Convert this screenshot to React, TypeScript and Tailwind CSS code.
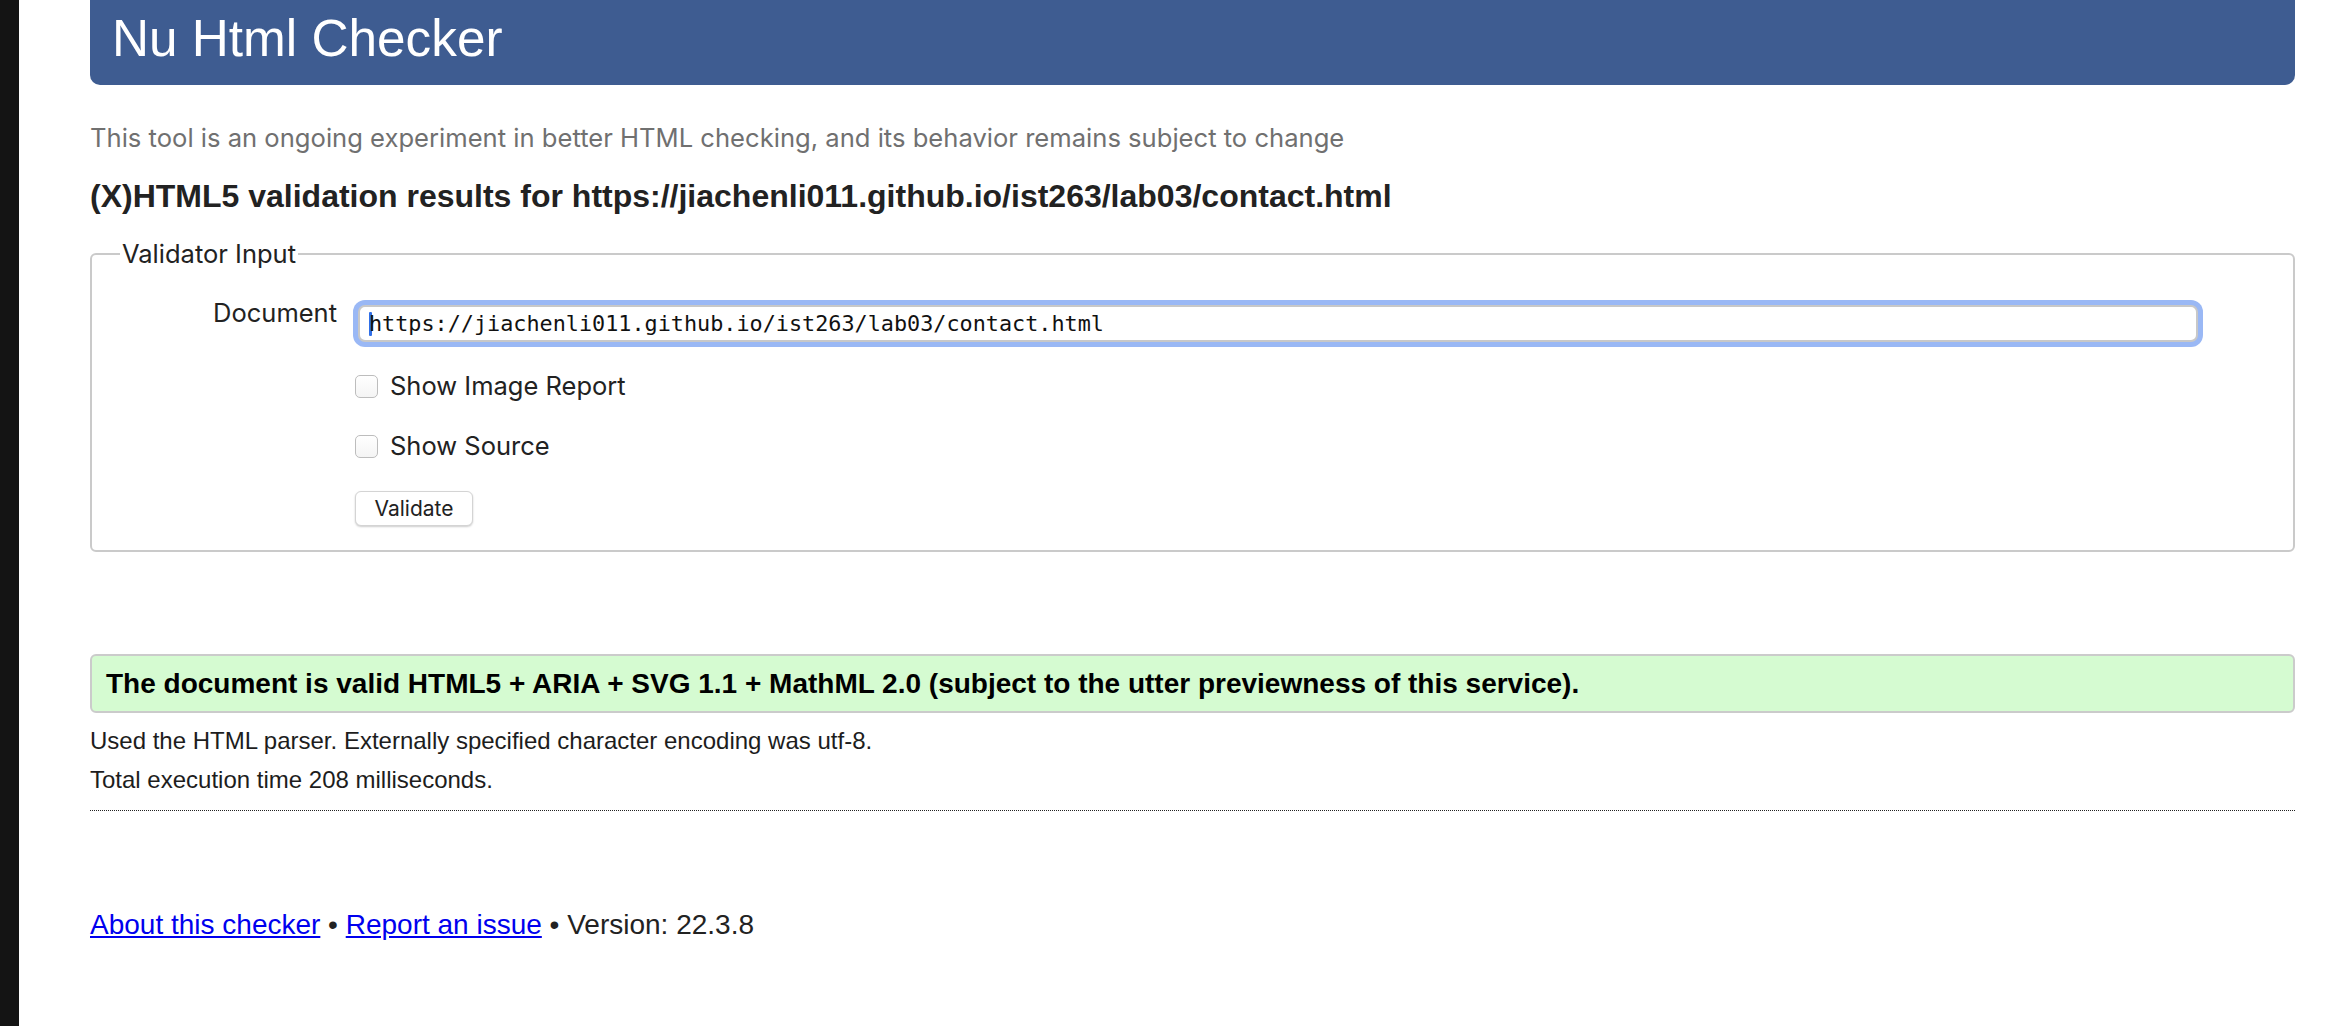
export default function App() {
  return (
    <div className="flex min-h-screen bg-white font-['Liberation_Sans',Arial,sans-serif] text-[#222]">
      <div className="w-[19px] shrink-0 bg-[#141414]" />
      <div className="flex-1 pl-[71px] pr-[53px]">
        <div className="flex h-[85px] items-center rounded-b-[10px] bg-[#3e5c91] px-[22px] pb-[8px]">
          <h1 className="text-[51.3px] leading-none text-white">Nu Html Checker</h1>
        </div>

        <p className="mt-[38px] font-['Inter',sans-serif] text-[25.6px] leading-[30px] text-[#707070]">
          This tool is an ongoing experiment in better HTML checking, and its behavior remains subject to change
        </p>
        <h2 className="mt-[24px] text-[32px] font-bold leading-[38px] text-[#222]">
          (X)HTML5 validation results for https://jiachenli011.github.io/ist263/lab03/contact.html
        </h2>

        <fieldset className="mt-[25px] h-[312px] rounded-[6px] border-2 border-[#cacaca] pl-[28px] pr-[90px] font-['Inter',sans-serif]">
          <legend className="px-[2px] text-[25.5px] leading-[28px] text-[#222]">Validator Input</legend>
          <div className="mt-[28px] flex items-start">
            <label className="w-[233px] pr-[16px] text-right text-[25.5px] leading-[34px] text-[#222]">Document</label>
            <div className="mt-[4px] flex-1 rounded-[12px] bg-[#9ab8f5] p-[5px]">
              <div className="flex h-[37px] items-center rounded-[7px] border-2 border-[#c8c8c8] bg-white pl-[9px]">
                <span className="h-[24px] w-[3px] rounded-[1px] bg-[#2f6fe8]" />
                <span className="-ml-[3px] font-['DejaVu_Sans_Mono',monospace] text-[21.8px] leading-none text-[#111]">
                  https://jiachenli011.github.io/ist263/lab03/contact.html
                </span>
              </div>
            </div>
          </div>
          <div className="ml-[235px] mt-[24px] flex items-center gap-[12px]">
            <span className="h-[23px] w-[23px] rounded-[5px] border border-[#bdbdbd] bg-gradient-to-b from-white to-[#f4f4f4]" />
            <span className="text-[25.5px] leading-[30px] text-[#222]">Show Image Report</span>
          </div>
          <div className="ml-[235px] mt-[30px] flex items-center gap-[12px]">
            <span className="h-[23px] w-[23px] rounded-[5px] border border-[#bdbdbd] bg-gradient-to-b from-white to-[#f4f4f4]" />
            <span className="text-[25.5px] leading-[30px] text-[#222]">Show Source</span>
          </div>
          <div className="ml-[235px] mt-[30px]">
            <button className="h-[35px] w-[118px] rounded-[6px] border border-[#d4d4d4] bg-white text-[21px] leading-none text-[#222] shadow-[0_1px_2px_rgba(0,0,0,0.2)]">
              Validate
            </button>
          </div>
        </fieldset>

        <div className="mt-[102px] flex h-[59px] items-center rounded-[6px] border-2 border-[#cbcbcb] bg-[#d5fbd1] px-[14px]">
          <p className="text-[28px] font-bold text-black">
            The document is valid HTML5 + ARIA + SVG 1.1 + MathML 2.0 (subject to the utter previewness of this service).
          </p>
        </div>

        <p className="mt-[14px] text-[24px] leading-[28px] text-[#1d1d1d]">
          Used the HTML parser. Externally specified character encoding was utf-8.
        </p>
        <p className="mt-[11px] text-[24px] leading-[28px] text-[#1d1d1d]">Total execution time 208 milliseconds.</p>
        <div className="mt-[16px] border-b border-dotted border-[#222]" />

        <p className="mt-[98px] text-[28px] leading-[32px] text-[#222]">
          <a href="#" className="text-[#0000ee] underline">About this checker</a>
          {' • '}
          <a href="#" className="text-[#0000ee] underline">Report an issue</a>
          {' • Version: 22.3.8'}
        </p>
      </div>
    </div>
  );
}
